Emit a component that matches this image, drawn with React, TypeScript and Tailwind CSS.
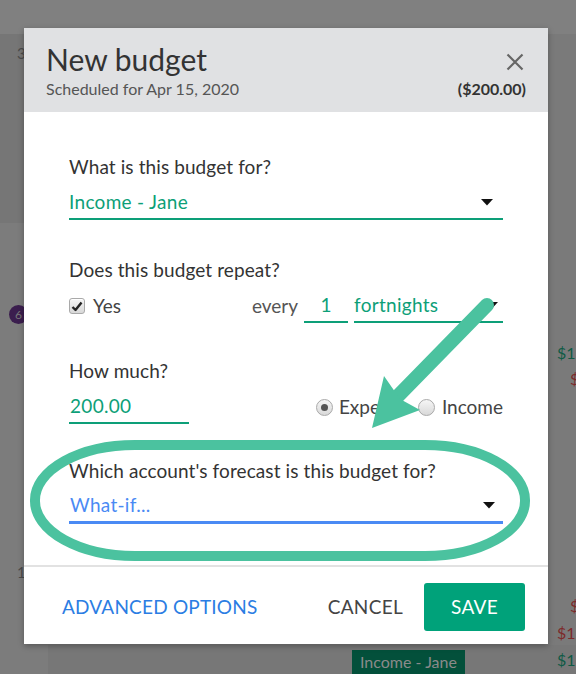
import React from "react";

const green = "text-[#0d9f78]";

function Caret() {
  return (
    <svg width="12" height="7" viewBox="0 0 12 7" className="shrink-0">
      <path d="M0 0h12L6 6.5z" fill="#111" />
    </svg>
  );
}

function Checkbox() {
  return (
    <span className="flex h-[16px] w-[16px] items-center justify-center rounded-[3px] border border-[#a9a9a9] bg-gradient-to-b from-[#f4f4f4] to-[#d8d8d8] shadow-[inset_0_1px_0_#fff]">
      <svg width="12" height="11" viewBox="0 0 12 11">
        <path d="M1.5 6l3 3 6-7.5" fill="none" stroke="#222" strokeWidth="2.4" strokeLinejoin="round" />
      </svg>
    </span>
  );
}

function Radio({ checked }: { checked?: boolean }) {
  return (
    <span className="flex h-[17px] w-[17px] items-center justify-center rounded-full border border-[#a9a9a9] bg-gradient-to-b from-[#f6f6f6] to-[#d9d9d9]">
      {checked && <span className="h-[7px] w-[7px] rounded-full bg-[#555]" />}
    </span>
  );
}

function Label({ children, className = "" }: { children: React.ReactNode; className?: string }) {
  return <div className={`h-[24px] text-[19px] leading-[24px] tracking-[0.1px] text-[#333] ${className}`}>{children}</div>;
}

export default function App() {
  return (
    <div
      className="relative h-[674px] w-[576px] overflow-hidden bg-[#7a7a7a]"
      style={{ fontFamily: "Lato, 'Open Sans', sans-serif" }}
    >
      {/* backdrop page */}
      <div className="flex h-full flex-col">
        <div className="h-[34px] bg-[#808080]" />
        <div className="flex flex-1">
          <div className="flex w-[48px] flex-col">
            <div className="h-[189px] bg-[#767676] pl-[17px] pt-[8px] text-[15px] text-[#4a4a4a]">3</div>
            <div className="h-[330px] bg-[#7c7c7c] pl-[9px] pt-[82px]">
              <div className="flex h-[19px] w-[19px] items-center justify-center rounded-full bg-[#3b1e4e] text-[12px] text-[#777]">
                6
              </div>
            </div>
            <div className="flex-1 bg-[#7c7c7c] pl-[17px] pt-[8px] text-[15px] text-[#4a4a4a]">1</div>
          </div>
          <div className="flex flex-1 flex-col">
            <div className="flex-1" />
            <div className="flex h-[29px] items-end bg-[#777] pl-[304px]">
              <div className="h-[24px] bg-[#03503b] px-[8px] text-[16px] leading-[24px] text-[#8a8a8a]">Income - Jane</div>
            </div>
          </div>
        </div>
      </div>
      <div className="absolute left-[557px] top-[340px] flex flex-col items-end text-[16px] leading-[26px]">
        <span className="text-[#0f5a45]">$1,</span>
        <span className="text-[#7d2a2a]">$</span>
      </div>
      <div className="absolute left-[557px] top-[592px] flex flex-col items-end text-[16px] leading-[27px]">
        <span className="text-[#7d2a2a]">$</span>
        <span className="text-[#7d2a2a]">$1,</span>
        <span className="text-[#0f5a45]">$1,</span>
      </div>

      {/* modal */}
      <div className="absolute left-[24px] top-[28px] flex w-[524px] flex-col bg-white shadow-[0_2px_6px_rgba(0,0,0,0.3)]">
        <div className="h-[84px] bg-[#e0e1e3] pl-[22px] pr-[22px] pt-[12px]">
          <div className="flex items-start justify-between">
            <div className="text-[30px] leading-[38px] text-[#333]">New budget</div>
            <svg width="18" height="18" viewBox="0 0 18 18" className="mr-[2px] mt-[13px]">
              <path d="M1.5 1.5l15 15M16.5 1.5l-15 15" stroke="#666" strokeWidth="2.2" />
            </svg>
          </div>
          <div className="mt-[1px] flex items-center justify-between text-[16px] leading-[20px] text-[#555]">
            <span>Scheduled for Apr 15, 2020</span>
            <span className="font-bold text-[#333]">($200.00)</span>
          </div>
        </div>

        <div className="flex flex-col px-[45px] pb-[41px] pt-[43px]">
          <Label>What is this budget for?</Label>
          <div className="mt-[7px] flex h-[34px] items-center justify-between border-b-2 border-[#0d9f78] pr-[10px]">
            <span className={`text-[19px] tracking-[0.3px] ${green}`}>Income - Jane</span>
            <Caret />
          </div>

          <Label className="mt-[38px]">Does this budget repeat?</Label>
          <div className="mt-[7px] flex h-[34px] items-center">
            <Checkbox />
            <span className="ml-[8px] text-[19px] text-[#444]">Yes</span>
            <span className="ml-auto mr-[6px] text-[19px] text-[#555]">every</span>
            <div className="flex h-[34px] w-[44px] items-center justify-center border-b-2 border-[#0d9f78]">
              <span className={`text-[19px] ${green}`}>1</span>
            </div>
            <div className="ml-[6px] flex h-[34px] w-[149px] items-center justify-between border-b-2 border-[#0d9f78] pr-[5px]">
              <span className={`text-[19px] tracking-[0.3px] ${green}`}>fortnights</span>
              <Caret />
            </div>
          </div>

          <Label className="mt-[36px]">How much?</Label>
          <div className="mt-[7px] flex h-[34px] items-center">
            <div className="flex h-[34px] w-[120px] items-center border-b-2 border-[#0d9f78] pl-[1px]">
              <span className={`text-[19px] tracking-[0.3px] ${green}`}>200.00</span>
            </div>
            <div className="ml-auto flex items-center gap-[6px]">
              <Radio checked />
              <span className="text-[19px] text-[#444]">Expense</span>
            </div>
            <div className="ml-[9px] flex items-center gap-[7px]">
              <Radio />
              <span className="text-[19px] text-[#444]">Income</span>
            </div>
          </div>

          <Label className="mt-[35px]">Which account's forecast is this budget for?</Label>
          <div className="mt-[7px] flex h-[34px] items-center justify-between border-b-[3px] border-[#4a8af4] pl-[1px] pr-[8px]">
            <span className="text-[19px] tracking-[0.3px] text-[#4a8af4]">What-if...</span>
            <Caret />
          </div>
        </div>

        <div className="h-[2px] bg-[#e2e2e2]" />

        <div className="flex items-center pb-[13px] pl-[38px] pr-[23px] pt-[16px]">
          <span className="text-[19px] tracking-[0.2px] text-[#2b7de3]">ADVANCED OPTIONS</span>
          <span className="ml-auto text-[19px] tracking-[0.3px] text-[#444]">CANCEL</span>
          <button className="ml-[21px] flex h-[48px] w-[101px] items-center justify-center rounded-[3px] bg-[#00a27a] text-[19px] tracking-[0.3px] text-white">
            SAVE
          </button>
        </div>
      </div>

      {/* annotation */}
      <svg className="pointer-events-none absolute left-0 top-0" width="576" height="674" viewBox="0 0 576 674">
        <rect x="35" y="445" width="490" height="111" rx="100" ry="55" fill="none" stroke="#4bc29f" strokeWidth="10" />
        <path d="M487 305L398 396" stroke="#4bc29f" strokeWidth="14" strokeLinecap="round" />
        <path d="M384 376L372 428L420 410L400 399Z" fill="#4bc29f" />
      </svg>
    </div>
  );
}
